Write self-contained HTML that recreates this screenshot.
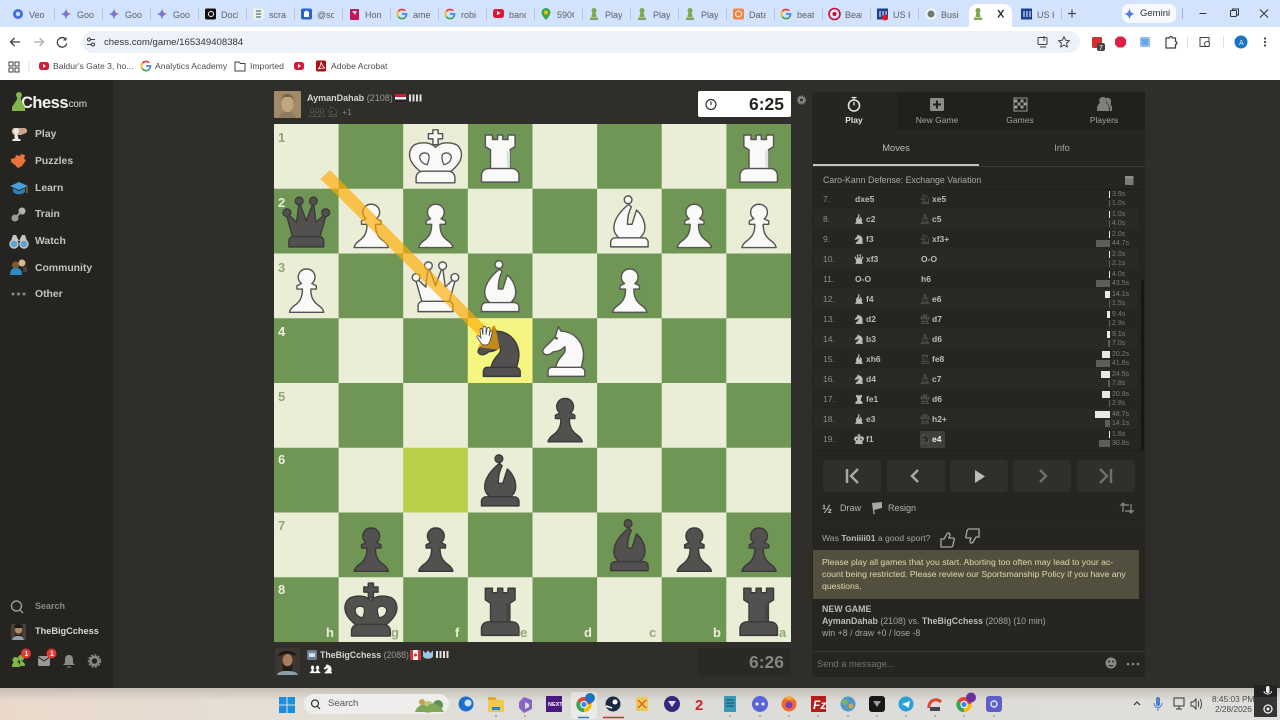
<!DOCTYPE html>
<html><head><meta charset="utf-8"><title>Chess.com game</title>
<style>
*{box-sizing:border-box}
html,body{margin:0;padding:0;width:1280px;height:720px;overflow:hidden;background:#302e2b}
body{font-family:"Liberation Sans",sans-serif;position:relative}
#w{position:absolute;left:0;top:0;width:1280px;height:720px;filter:blur(.35px);overflow:hidden}
.a{position:absolute}
.t{position:absolute;white-space:nowrap;line-height:1}
.w{--f:#f9f9f8;--s:#565452;--h:#e2e2e0;--i:#f9f9f8}
.b{--f:#53514f;--s:#3c3a38;--h:#474543;--i:#ebeed6}
.mw{--f:#bdbcba;--s:#bdbcba;--h:#bdbcba;--i:#26251f}
.mb{--f:#2a2926;--s:#aaa9a7;--h:#2a2926;--i:#aaa9a7}
.tab{position:absolute;top:8.500px;font-size:9px;color:#5b6068;line-height:12px;width:17px;overflow:hidden;white-space:nowrap}
.sep{position:absolute;top:8px;width:1px;height:12px;background:#b5c3d8}
.menu{position:absolute;left:35px;font-size:10.400px;font-weight:bold;color:#c4c3c1;line-height:12px}
.r{position:absolute;left:813px;width:325px;height:20px}
.r.z{background:#2a2926}
.n{position:absolute;left:10px;top:5px;font-size:8.500px;color:#8e8d8b;line-height:10px}
.m1,.m2{position:absolute;top:5px;font-size:8.500px;font-weight:bold;color:#bcbbb9;line-height:10px;white-space:nowrap}
.m1{left:42px}.m2{left:108px}
.m1 svg,.m2 svg{width:12px;height:12px;vertical-align:-1px;margin:-2px 1px -2px -2px}
.bw,.bb{position:absolute;right:28px;height:7px}
.bw{top:2px;background:#e8e8e6}.bb{top:11px;background:#5e5d5a}
.s1,.s2{position:absolute;left:299px;font-size:7px;color:#7d7c7a;line-height:8px}
.s1{top:1.500px}.s2{top:10.500px}
.nav{position:absolute;top:460px;height:32px;width:58px;background:#302f2c;border-radius:4px}
.tabb{position:absolute;top:92px;height:38px;background:#21201d}
.lab{position:absolute;font-size:8.500px;color:#a5a4a2;line-height:10px;text-align:center}
</style></head><body>
<div id="w">
<svg width="0" height="0" style="position:absolute">
<defs>
<g id="P"><path d="M50 24c-7 0-12.500 5.500-12.500 12.500 0 4 2 7.500 5 10l-7 3.500v5h8.500c0 10-2 17-9 23-5 4-10 7-11 13h53c-1-6-6-9-11-13-7-6-9-13-9-23h8.500v-5l-7-3.500c3-2.500 5-6 5-10 0-7-5.500-12.500-12.500-12.500z" style="fill:var(--f);stroke:var(--s)" stroke-width="2.200" stroke-linejoin="round"/></g>
<g id="R"><path d="M27 17h11v7h8v-7h8v7h8v-7h11v18l-8 5v29H35V40l-8-5z" style="fill:var(--f);stroke:var(--s)" stroke-width="2.200" stroke-linejoin="round"/><path d="M59 41h6v28h-5c0-9 0-19-1-28z" style="fill:var(--h)"/><path d="M32 69h36c7 0 11 5 11 11v10H21V80c0-6 4-11 11-11z" style="fill:var(--f);stroke:var(--s)" stroke-width="2.200" stroke-linejoin="round"/></g>
<g id="K"><path d="M46 9h8v6h7v8h-7v9h-8v-9h-7v-8h7z" style="fill:var(--f);stroke:var(--s)" stroke-width="2.200" stroke-linejoin="round"/><path d="M50 36C42 28 30 28 20 31 12 34 9 43 10 50c1 10 10 18 17 24h46c7-6 16-14 17-24 1-7-2-16-10-19-10-3-22-3-30 5z" style="fill:var(--f);stroke:var(--s)" stroke-width="2.200" stroke-linejoin="round"/><path d="M35 45c-6-1-11 3-9 9 1 4 5 8 11 9 3-6 4-13 2-16-1-1-2-2-4-2zM65 45c6-1 11 3 9 9-1 4-5 8-11 9-3-6-4-13-2-16 1-1 2-2 4-2z" style="fill:var(--i);stroke:var(--s)" stroke-width="2"/><path d="M31 73h38c7 0 11 5 11 10v8H20v-8c0-5 4-10 11-10z" style="fill:var(--f);stroke:var(--s)" stroke-width="2.200" stroke-linejoin="round"/></g>
<g id="Q"><path d="M29 75 18 36l17 16 4-32 11 30 11-30 4 32 17-16-11 39z" style="fill:var(--f);stroke:var(--s)" stroke-width="2.200" stroke-linejoin="round"/><g style="fill:var(--f);stroke:var(--s)" stroke-width="2.200"><circle cx="20" cy="37" r="6"/><circle cx="39" cy="19" r="6"/><circle cx="61" cy="19" r="6"/><circle cx="80" cy="37" r="6"/></g><path d="M30 74h40c4 0 7 3 7 7v9H23v-9c0-4 3-7 7-7z" style="fill:var(--f);stroke:var(--s)" stroke-width="2.200" stroke-linejoin="round"/></g>
<g id="B"><path d="M49 24C36 34 26 48 26 60c0 9 5 14 10 18h28c5-4 10-9 10-18 0-11-6-21-13-27l-7 22h-7c0-10 2-20 6-27z" style="fill:var(--f);stroke:var(--s)" stroke-width="2.200" stroke-linejoin="round"/><circle cx="48" cy="17" r="6" style="fill:var(--f);stroke:var(--s)" stroke-width="2.200"/><path d="M28 76h44c4 0 7 3 7 7v7H21v-7c0-4 3-7 7-7z" style="fill:var(--f);stroke:var(--s)" stroke-width="2.200" stroke-linejoin="round"/></g>
<g id="N"><path d="M40 13l4 7c18 0 34 14 35 36 0 8-2 14-4 21H36c1-10 7-16 12-22 3-4 3-8 2-11-6 6-12 8-18 8-4 4-10 6-14 3-4-3-2-7 2-11 8-8 14-12 16-18z" style="fill:var(--f);stroke:var(--s)" stroke-width="2.200" stroke-linejoin="round"/><circle cx="37" cy="31" r="2.200" style="fill:var(--s)"/><path d="M30 76h44c4 0 7 3 7 7v7H24v-7c0-4 2-7 6-7z" style="fill:var(--f);stroke:var(--s)" stroke-width="2.200" stroke-linejoin="round"/></g>
</defs></svg>

<!-- Chrome tab strip -->
<div class="a" style="left:0;top:0;width:1280px;height:27px;background:#d3e3fd"></div>
<div class="a" style="left:0;top:27px;width:1280px;height:53px;background:#fff"></div>
<div class="a" style="left:82px;top:31px;width:998px;height:22px;border-radius:11px;background:#edf2fa"></div>
<div class="a" style="left:969px;top:4px;width:43px;height:24px;border-radius:8px 8px 0 0;background:#fff"></div>
<div class="a" style="left:1122px;top:4px;width:54px;height:19px;border-radius:7px;background:#f6f9fe"></div>

<span class="tab" style="left:29px">Veo</span><span class="tab" style="left:77px">Goo</span><span class="tab" style="left:125px">Goo</span><span class="tab" style="left:173px">Goo</span><span class="tab" style="left:221px">Docl</span><span class="tab" style="left:269px">scra</span><span class="tab" style="left:317px">@so</span><span class="tab" style="left:365px">Hon</span><span class="tab" style="left:413px">ame</span><span class="tab" style="left:461px">robi</span><span class="tab" style="left:509px">banc</span><span class="tab" style="left:557px">590C</span><span class="tab" style="left:605px">Play</span><span class="tab" style="left:653px">Play</span><span class="tab" style="left:701px">Play</span><span class="tab" style="left:749px">Data</span><span class="tab" style="left:797px">beat</span><span class="tab" style="left:845px">Beat</span><span class="tab" style="left:893px">US H</span><span class="tab" style="left:941px">Busi</span><span class="tab" style="left:1037px">US H</span>
<span class="sep" style="left:54px"></span><span class="sep" style="left:102px"></span><span class="sep" style="left:150px"></span><span class="sep" style="left:198px"></span><span class="sep" style="left:246px"></span><span class="sep" style="left:294px"></span><span class="sep" style="left:342px"></span><span class="sep" style="left:390px"></span><span class="sep" style="left:438px"></span><span class="sep" style="left:486px"></span><span class="sep" style="left:534px"></span><span class="sep" style="left:582px"></span><span class="sep" style="left:630px"></span><span class="sep" style="left:678px"></span><span class="sep" style="left:726px"></span><span class="sep" style="left:774px"></span><span class="sep" style="left:822px"></span><span class="sep" style="left:870px"></span><span class="sep" style="left:918px"></span><span class="sep" style="left:1061px"></span>
<span class="t" style="left:1140px;top:9px;font-size:9.500px;color:#333">Gemini</span>

<span class="t" style="left:104px;top:38px;font-size:9.600px;color:#30343a">chess.com/game/165349408384</span>
<span class="t" style="left:53px;top:62px;font-size:8.600px;color:#4a4d52">Baldur's Gate 3, ho...</span>
<span class="t" style="left:155px;top:62px;font-size:8.600px;color:#4a4d52">Analytics Academy</span>
<span class="t" style="left:250px;top:62px;font-size:8.600px;color:#4a4d52">Imported</span>
<span class="t" style="left:331px;top:62px;font-size:8.600px;color:#4a4d52">Adobe Acrobat</span>

<!-- Page -->
<div class="a" style="left:0;top:80px;width:1280px;height:608px;background:#302e2b"></div>
<div class="a" style="left:0;top:80px;width:113px;height:608px;background:#262421"></div>

<!-- Sidebar text -->
<span class="t" style="left:21px;top:95px;font-size:16.500px;font-weight:bold;color:#f4f4f3;letter-spacing:-.5px">Chess</span>
<span class="t" style="left:66px;top:100px;font-size:10px;color:#dedddb;letter-spacing:-.2px">.com</span>
<span class="menu" style="top:129px">Play</span>
<span class="menu" style="top:156px">Puzzles</span>
<span class="menu" style="top:183px">Learn</span>
<span class="menu" style="top:209px">Train</span>
<span class="menu" style="top:236px">Watch</span>
<span class="menu" style="top:263px">Community</span>
<span class="menu" style="top:289px">Other</span>
<span class="t" style="left:35px;top:602px;font-size:9px;color:#8b8a88;font-weight:bold">Search</span>
<span class="t" style="left:35px;top:627px;font-size:9.200px;color:#d8d7d5;font-weight:bold">TheBigCchess</span>

<!-- Players -->
<span class="t" style="left:307px;top:94px;font-size:9px;font-weight:bold;color:#d6d5d3">AymanDahab <span style="font-weight:normal;color:#9a9997">(2108)</span></span>
<span class="t" style="left:342px;top:108px;font-size:8.500px;color:#83827f">+1</span>
<span class="t" style="left:320px;top:651px;font-size:8.800px;font-weight:bold;color:#d6d5d3">TheBigCchess <span style="font-weight:normal;color:#9a9997">(2088)</span></span>

<div class="a" style="left:698px;top:91px;width:93px;height:26px;background:#fff;border-radius:2px"></div>
<span class="t" style="right:496px;top:96px;font-size:17.500px;font-weight:bold;color:#27251f">6:25</span>
<div class="a" style="left:698px;top:648px;width:93px;height:28px;background:#2b2926;border-radius:2px"></div>
<span class="t" style="right:496px;top:654px;font-size:17.500px;font-weight:bold;color:#85847f">6:26</span>

<!-- Board -->
<svg class="a" style="left:274px;top:124px" width="517" height="518" viewBox="0 0 517 518">
<rect width="517" height="518" fill="#ebeed6"/>
<g fill="#6f9655">
<rect x="64.600" y="0" width="64.600" height="64.750"/><rect x="193.900" y="0" width="64.600" height="64.750"/><rect x="323.100" y="0" width="64.600" height="64.750"/><rect x="452.400" y="0" width="64.600" height="64.750"/>
<rect x="0" y="64.750" width="64.600" height="64.750"/><rect x="129.200" y="64.750" width="64.600" height="64.750"/><rect x="258.500" y="64.750" width="64.600" height="64.750"/><rect x="387.700" y="64.750" width="64.600" height="64.750"/>
<rect x="64.600" y="129.500" width="64.600" height="64.750"/><rect x="193.900" y="129.500" width="64.600" height="64.750"/><rect x="323.100" y="129.500" width="64.600" height="64.750"/><rect x="452.400" y="129.500" width="64.600" height="64.750"/>
<rect x="0" y="194.250" width="64.600" height="64.750"/><rect x="129.200" y="194.250" width="64.600" height="64.750"/><rect x="258.500" y="194.250" width="64.600" height="64.750"/><rect x="387.700" y="194.250" width="64.600" height="64.750"/>
<rect x="64.600" y="259" width="64.600" height="64.750"/><rect x="193.900" y="259" width="64.600" height="64.750"/><rect x="323.100" y="259" width="64.600" height="64.750"/><rect x="452.400" y="259" width="64.600" height="64.750"/>
<rect x="0" y="323.750" width="64.600" height="64.750"/><rect x="258.500" y="323.750" width="64.600" height="64.750"/><rect x="387.700" y="323.750" width="64.600" height="64.750"/>
<rect x="64.600" y="388.500" width="64.600" height="64.750"/><rect x="193.900" y="388.500" width="64.600" height="64.750"/><rect x="323.100" y="388.500" width="64.600" height="64.750"/><rect x="452.400" y="388.500" width="64.600" height="64.750"/>
<rect x="0" y="453.250" width="64.600" height="64.750"/><rect x="129.200" y="453.250" width="64.600" height="64.750"/><rect x="258.500" y="453.250" width="64.600" height="64.750"/><rect x="387.700" y="453.250" width="64.600" height="64.750"/>
</g>
<rect x="193.900" y="194.250" width="64.600" height="64.750" fill="#f5f682"/>
<rect x="129.200" y="323.750" width="64.600" height="64.750" fill="#bace48"/>
<g font-family="Liberation Sans,sans-serif" font-size="13" font-weight="bold">
<text x="4" y="18" fill="#8fa976">1</text><text x="4" y="83" fill="#ebeed6">2</text><text x="4" y="148" fill="#8fa976">3</text><text x="4" y="212" fill="#ebeed6">4</text><text x="4" y="277" fill="#8fa976">5</text><text x="4" y="340" fill="#ebeed6">6</text><text x="4" y="406" fill="#8fa976">7</text><text x="4" y="470" fill="#ebeed6">8</text>
<text x="52" y="513" fill="#ebeed6">h</text><text x="117" y="513" fill="#8fa976">g</text><text x="181" y="513" fill="#ebeed6">f</text><text x="246" y="513" fill="#8fa976">e</text><text x="310" y="513" fill="#ebeed6">d</text><text x="375" y="513" fill="#8fa976">c</text><text x="439" y="513" fill="#ebeed6">b</text><text x="505" y="513" fill="#8fa976">a</text>
</g>
<g class="w">
<use href="#K" transform="translate(129.200 0) scale(.646)"/><use href="#R" transform="translate(193.900 0) scale(.646)"/><use href="#R" transform="translate(452.400 0) scale(.646)"/>
<use href="#P" transform="translate(64.600 64.750) scale(.646)"/><use href="#P" transform="translate(129.200 64.750) scale(.646)"/><use href="#B" transform="translate(323.100 64.750) scale(.646)"/><use href="#P" transform="translate(387.700 64.750) scale(.646)"/><use href="#P" transform="translate(452.400 64.750) scale(.646)"/>
<use href="#P" transform="translate(0 129.500) scale(.646)"/><use href="#Q" transform="translate(129.200 129.500) scale(.646)"/><use href="#B" transform="translate(193.900 129.500) scale(.646)"/><use href="#P" transform="translate(323.100 129.500) scale(.646)"/>
<use href="#N" transform="translate(258.500 194.250) scale(.646)"/>
</g>
<g class="b">
<use href="#Q" transform="translate(0 64.750) scale(.646)"/>
<use href="#N" transform="translate(193.900 194.250) scale(.646)"/>
<use href="#P" transform="translate(258.500 259) scale(.646)"/>
<use href="#B" transform="translate(193.900 323.750) scale(.646)"/>
<use href="#P" transform="translate(64.600 388.500) scale(.646)"/><use href="#P" transform="translate(129.200 388.500) scale(.646)"/><use href="#B" transform="translate(323.100 388.500) scale(.646)"/><use href="#P" transform="translate(387.700 388.500) scale(.646)"/><use href="#P" transform="translate(452.400 388.500) scale(.646)"/>
<use href="#K" transform="translate(64.600 453.250) scale(.646)"/><use href="#R" transform="translate(193.900 453.250) scale(.646)"/><use href="#R" transform="translate(452.400 453.250) scale(.646)"/>
</g>
<!-- arrow -->
<path d="M46.500 55 L56 46 L214 205 L221 201 L226 226 L204 223 L208 215 Z" fill="#ffaa00" fill-opacity=".66"/>
<!-- hand cursor -->
<path d="M207 219c-2-3-5-6-4-7 2-1 3 1 4 2l-1-8c0-2 2-2 2 0l1 5 0-7c0-2 3-2 3 0v7l1-6c0-2 3-2 3 0l-1 7 1-4c1-2 3-1 2 1l-2 8c-1 3-2 4-5 4s-3-1-4-2z" fill="#fff" stroke="#333" stroke-width=".7"/>
</svg>

<!-- Right panel -->
<div class="a" style="left:812px;top:92px;width:333px;height:585px;background:#262522"></div>
<div class="tabb" style="left:897px;width:248px"></div>
<div class="lab" style="left:820px;top:115px;width:68px;color:#e3e2e0;font-weight:bold">Play</div>
<div class="lab" style="left:903px;top:115px;width:68px">New Game</div>
<div class="lab" style="left:986px;top:115px;width:68px">Games</div>
<div class="lab" style="left:1070px;top:115px;width:68px">Players</div>
<div class="lab" style="left:862px;top:143px;width:68px;font-size:9.400px;color:#bcbbb9">Moves</div>
<div class="lab" style="left:1028px;top:143px;width:68px;font-size:9.400px;color:#a5a4a2">Info</div>
<div class="a" style="left:813px;top:166px;width:332px;height:1px;background:#3a3936"></div>
<div class="a" style="left:813px;top:164px;width:166px;height:2px;background:#c4c3bf"></div>
<span class="t" style="left:823px;top:176px;font-size:8.800px;color:#a8a7a4">Caro-Kann Defense: Exchange Variation</span>
<div class="a" style="left:813px;top:189px;width:332px;height:1px;background:#1f1e1b"></div>

<div class="r" style="top:189px"><span class="n">7.</span><span class="m1">dxe5</span><span class="m2 mb"><svg viewBox="0 0 100 100"><use href="#N"/></svg>xe5</span><i class="bw" style="width:1.500px"></i><i class="bb" style="width:1px"></i><span class="s1">3.9s</span><span class="s2">1.0s</span></div>
<div class="r z" style="top:209px"><span class="n">8.</span><span class="m1 mw"><svg viewBox="0 0 100 100"><use href="#B"/></svg>c2</span><span class="m2 mb"><svg viewBox="0 0 100 100"><use href="#B"/></svg>c5</span><i class="bw" style="width:1.500px"></i><i class="bb" style="width:1px"></i><span class="s1">1.0s</span><span class="s2">4.0s</span></div>
<div class="r" style="top:229px"><span class="n">9.</span><span class="m1 mw"><svg viewBox="0 0 100 100"><use href="#N"/></svg>f3</span><span class="m2 mb"><svg viewBox="0 0 100 100"><use href="#N"/></svg>xf3+</span><i class="bw" style="width:1.500px"></i><i class="bb" style="width:14px"></i><span class="s1">2.0s</span><span class="s2">44.7s</span></div>
<div class="r z" style="top:249px"><span class="n">10.</span><span class="m1 mw"><svg viewBox="0 0 100 100"><use href="#Q"/></svg>xf3</span><span class="m2">O-O</span><i class="bw" style="width:1.500px"></i><i class="bb" style="width:1px"></i><span class="s1">2.0s</span><span class="s2">2.1s</span></div>
<div class="r" style="top:269px"><span class="n">11.</span><span class="m1">O-O</span><span class="m2">h6</span><i class="bw" style="width:1.500px"></i><i class="bb" style="width:14px"></i><span class="s1">4.0s</span><span class="s2">43.5s</span></div>
<div class="r z" style="top:289px"><span class="n">12.</span><span class="m1 mw"><svg viewBox="0 0 100 100"><use href="#B"/></svg>f4</span><span class="m2 mb"><svg viewBox="0 0 100 100"><use href="#B"/></svg>e6</span><i class="bw" style="width:5px"></i><i class="bb" style="width:1px"></i><span class="s1">14.1s</span><span class="s2">1.5s</span></div>
<div class="r" style="top:309px"><span class="n">13.</span><span class="m1 mw"><svg viewBox="0 0 100 100"><use href="#N"/></svg>d2</span><span class="m2 mb"><svg viewBox="0 0 100 100"><use href="#Q"/></svg>d7</span><i class="bw" style="width:3px"></i><i class="bb" style="width:1px"></i><span class="s1">9.4s</span><span class="s2">2.9s</span></div>
<div class="r z" style="top:329px"><span class="n">14.</span><span class="m1 mw"><svg viewBox="0 0 100 100"><use href="#N"/></svg>b3</span><span class="m2 mb"><svg viewBox="0 0 100 100"><use href="#B"/></svg>d6</span><i class="bw" style="width:3px"></i><i class="bb" style="width:2px"></i><span class="s1">9.1s</span><span class="s2">7.0s</span></div>
<div class="r" style="top:349px"><span class="n">15.</span><span class="m1 mw"><svg viewBox="0 0 100 100"><use href="#B"/></svg>xh6</span><span class="m2 mb"><svg viewBox="0 0 100 100"><use href="#R"/></svg>fe8</span><i class="bw" style="width:8px"></i><i class="bb" style="width:14px"></i><span class="s1">20.2s</span><span class="s2">41.6s</span></div>
<div class="r z" style="top:369px"><span class="n">16.</span><span class="m1 mw"><svg viewBox="0 0 100 100"><use href="#N"/></svg>d4</span><span class="m2 mb"><svg viewBox="0 0 100 100"><use href="#B"/></svg>c7</span><i class="bw" style="width:9.500px"></i><i class="bb" style="width:2px"></i><span class="s1">24.5s</span><span class="s2">7.8s</span></div>
<div class="r" style="top:389px"><span class="n">17.</span><span class="m1 mw"><svg viewBox="0 0 100 100"><use href="#R"/></svg>fe1</span><span class="m2 mb"><svg viewBox="0 0 100 100"><use href="#Q"/></svg>d6</span><i class="bw" style="width:8px"></i><i class="bb" style="width:1px"></i><span class="s1">20.8s</span><span class="s2">2.8s</span></div>
<div class="r z" style="top:409px"><span class="n">18.</span><span class="m1 mw"><svg viewBox="0 0 100 100"><use href="#B"/></svg>e3</span><span class="m2 mb"><svg viewBox="0 0 100 100"><use href="#Q"/></svg>h2+</span><i class="bw" style="width:15px"></i><i class="bb" style="width:5px"></i><span class="s1">48.7s</span><span class="s2">14.1s</span></div>
<div class="r" style="top:429px"><span class="n">19.</span><span class="m1 mw"><svg viewBox="0 0 100 100"><use href="#K"/></svg>f1</span><span class="a" style="left:107px;top:2px;width:25px;height:17px;background:#403f3c;border-radius:2px"></span><span class="m2 mb" style="color:#eee"><svg viewBox="0 0 100 100"><use href="#N"/></svg>e4</span><i class="bw" style="width:1.500px"></i><i class="bb" style="width:11px"></i><span class="s1">1.6s</span><span class="s2">30.8s</span></div>

<div class="a" style="left:1141px;top:280px;width:3px;height:170px;background:#171613"></div>
<div class="a" style="left:813px;top:450px;width:332px;height:1px;background:#1f1e1b"></div>
<div class="nav" style="left:823px"></div><div class="nav" style="left:887px"></div><div class="nav" style="left:950px"></div><div class="nav" style="left:1013px"></div><div class="nav" style="left:1077px"></div>

<span class="t" style="left:840px;top:504px;font-size:9px;color:#b5b4b2">Draw</span>
<span class="t" style="left:888px;top:504px;font-size:9px;color:#b5b4b2">Resign</span>
<div class="a" style="left:813px;top:523px;width:332px;height:1px;background:#2b2a27"></div>
<span class="t" style="left:822px;top:534px;font-size:8.600px;color:#a5a4a2">Was <b style="color:#bdbcba">Toniiii01</b> a good sport?</span>
<div class="a" style="left:813px;top:550px;width:326px;height:49px;background:#524f3e"></div>
<span class="t" style="left:822px;top:558px;font-size:8.700px;color:#e0dbaa">Please play all games that you start. Aborting too often may lead to your ac-</span>
<span class="t" style="left:822px;top:570px;font-size:8.700px;color:#e0dbaa">count being restricted. Please review our Sportsmanship Policy if you have any</span>
<span class="t" style="left:822px;top:582px;font-size:8.700px;color:#e0dbaa">questions.</span>
<span class="t" style="left:822px;top:605px;font-size:8.800px;font-weight:bold;color:#bdbcba">NEW GAME</span>
<span class="t" style="left:822px;top:617px;font-size:8.800px;color:#a5a4a2"><b style="color:#bdbcba">AymanDahab</b> (2108) vs. <b style="color:#bdbcba">TheBigCchess</b> (2088) (10 min)</span>
<span class="t" style="left:822px;top:629px;font-size:8.800px;color:#a5a4a2">win +8 / draw +0 / lose -8</span>
<div class="a" style="left:813px;top:651px;width:332px;height:1px;background:#3a3936"></div>
<span class="t" style="left:817px;top:660px;font-size:9.300px;color:#75746f">Send a message...</span>

<!-- Taskbar -->
<div class="a" style="left:0;top:688px;width:1280px;height:32px;background:linear-gradient(180deg,rgba(190,184,174,.8),rgba(225,222,216,0) 40%),linear-gradient(90deg,#ead9cb,#e4dfd7 25%,#dcdcd8 50%,#dedcd8 75%,#e0dfdc)"></div>
<div class="a" style="left:304px;top:694px;width:145px;height:20px;border-radius:10px;background:#eeeeec"></div>
<span class="t" style="left:328px;top:699px;font-size:9.600px;color:#54565a">Search</span>
<span class="t" style="left:1212px;top:694.500px;font-size:8.300px;color:#4a4c50">8:45:03 PM</span>
<span class="t" style="left:1215px;top:704.500px;font-size:8.300px;color:#4a4c50">2/28/2026</span>

<!-- Icon layer -->
<svg class="a" style="left:0;top:0" width="1280" height="720" viewBox="0 0 1280 720">
<!-- tab favicons -->
<circle cx="18" cy="14" r="5" fill="#3f6fd8"/><circle cx="18" cy="14" r="2.200" fill="#cfe0fb"/>
<g id="gem"><path d="M66 8.500c.7 3.500 2 4.800 5.500 5.500-3.500.7-4.800 2-5.500 5.500-.7-3.500-2-4.800-5.500-5.500 3.500-.7 4.800-2 5.500-5.500z" fill="#5b84e0"/><path d="M66 8.500c.7 3.500 2 4.800 5.500 5.500H66z" fill="#d96570"/></g>
<use href="#gem" x="48"/><use href="#gem" x="96"/>
<rect x="205" y="8.500" width="11" height="11" rx="1.500" fill="#111"/><circle cx="211" cy="14" r="2.500" fill="none" stroke="#eee"/>
<rect x="253" y="8.500" width="11" height="11" fill="#e9f3df"/><path d="M256 11h5M256 14h5M256 17h5" stroke="#354a8a"/>
<rect x="301" y="8.500" width="11" height="11" rx="2" fill="#2b63c7"/><path d="M304 17v-4c0-3 5-3 5 0v4z" fill="#fff"/>
<rect x="350" y="9" width="9" height="11" rx="1" fill="#c2185b"/><path d="M352 11h5l-2 4z" fill="#f3cfe0"/>
<g id="gg" fill="none" stroke-width="1.700"><path d="M398.300 11.400A4.500 4.500 0 0 1 405.200 10.800" stroke="#ea4335"/><path d="M398.300 11.400A4.500 4.500 0 0 0 398.300 16.600" stroke="#fbbc04"/><path d="M398.300 16.600A4.500 4.500 0 0 0 405.600 17" stroke="#34a853"/><path d="M402 14h4.500A4.500 4.500 0 0 1 405.600 17" stroke="#4285f4"/></g>
<use href="#gg" x="48"/><use href="#gg" x="384"/><use href="#gg" x="-256" y="52"/>
<rect x="493" y="9" width="11" height="9" rx="2.500" fill="#d81b3a"/><path d="M497 11v4l3.500-2z" fill="#fff"/>
<path d="M546 8a4.500 4.500 0 0 1 4.500 4.500c0 3-4.500 7.500-4.500 7.500s-4.500-4.500-4.500-7.500A4.500 4.500 0 0 1 546 8z" fill="#34a853"/><circle cx="546" cy="12.500" r="2" fill="#fbbc04"/>
<g id="pwn" fill="#7fa650"><circle cx="594" cy="10.500" r="2.500"/><path d="M592.500 12h3l1 5h-5zM590 17.500h8v2.500h-8z"/></g>
<use href="#pwn" x="48"/><use href="#pwn" x="96"/><use href="#pwn" x="384"/>
<rect x="733" y="8.500" width="11" height="11" rx="2" fill="#e8894a"/><circle cx="738.500" cy="14" r="3" fill="none" stroke="#fde3cf"/>
<circle cx="834.500" cy="14" r="5.500" fill="none" stroke="#cc0a28" stroke-width="1.600"/><circle cx="834.500" cy="14" r="2" fill="#cc0a28"/>
<rect x="877" y="8.500" width="11" height="11" fill="#1c3f94"/><path d="M880 11v6M883 11v6M886 11v6" stroke="#fff"/><circle cx="885" cy="17.500" r="3" fill="#e0142b"/>
<circle cx="931" cy="14" r="5.500" fill="#f2f5f8"/><circle cx="931" cy="14" r="3.500" fill="#6d7c70"/>
<rect x="1021" y="8.500" width="11" height="11" fill="#1c3f94"/><path d="M1024 11v6M1027 11v6M1030 11v6" stroke="#fff"/>
<path d="M998 10l5.500 7.500M1003.500 10l-5.500 7.500" stroke="#222" stroke-width="1.300"/>
<path d="M1072 9.500v8M1068 13.500h8" stroke="#45494f" stroke-width="1.200"/>
<path d="M1129.500 8.500c.7 3.500 2 4.800 5.500 5.500-3.500.7-4.800 2-5.500 5.500-.7-3.500-2-4.800-5.500-5.500 3.500-.7 4.800-2 5.500-5.500z" fill="#4c7fe0"/>
<path d="M1182.500 8v11" stroke="#a9b7cc"/>
<path d="M1199.500 13.500h7" stroke="#333"/>
<rect x="1230.500" y="10.500" width="6" height="6" rx="1" fill="none" stroke="#333"/><path d="M1232.500 10.500v-1.500h6v6h-1.500" fill="none" stroke="#333"/>
<path d="M1260 9.500l8 8M1268 9.500l-8 8" stroke="#333"/>
<!-- toolbar -->
<path d="M20 42h-9M14.500 38l-4 4 4 4" fill="none" stroke="#3c4043" stroke-width="1.300"/>
<path d="M34 42h9M39.500 38l4 4-4 4" fill="none" stroke="#a8adb3" stroke-width="1.300"/>
<path d="M66 39.500a4.800 4.800 0 1 0 .8 4" fill="none" stroke="#3c4043" stroke-width="1.300"/><path d="M66.500 37v3.500h-3.500z" fill="#3c4043"/>
<path d="M87 39.500h8M87 44.500h8" stroke="#3c4043"/><circle cx="89" cy="39.500" r="1.500" fill="#edf2fa" stroke="#3c4043"/><circle cx="93" cy="44.500" r="1.500" fill="#edf2fa" stroke="#3c4043"/>
<rect x="1038" y="37.500" width="9" height="7" rx="1" fill="none" stroke="#3c4043"/><path d="M1040 47h6M1044 36v5" stroke="#3c4043"/>
<path d="M1064 36.800l1.600 3.400 3.700.5-2.700 2.500.7 3.700-3.300-1.800-3.300 1.800.7-3.700-2.700-2.500 3.700-.5z" fill="none" stroke="#3c4043"/>
<rect x="1092" y="37" width="10" height="11" rx="1.500" fill="#d32f2f"/><rect x="1097" y="43" width="8" height="8" rx="2" fill="#444"/><text x="1099" y="50" font-size="7" fill="#fff" font-family="Liberation Sans">7</text>
<path d="M1118 36.500h5l3 3v5l-3 3h-5l-3-3v-5z" fill="#de1f48"/>
<rect x="1140" y="37" width="10" height="10" rx="1.500" fill="#90bdf0"/><rect x="1142" y="39" width="6" height="6" fill="#6aa4e8"/>
<path d="M1166 38h3.500a1.500 1.500 0 0 1 3 0h3v3.500a1.500 1.500 0 0 1 0 3v3.500h-9.500z" fill="none" stroke="#3c4043" stroke-width="1.200"/>
<rect x="1200" y="37.500" width="9" height="9" fill="none" stroke="#3c4043"/><circle cx="1207" cy="44" r="2.500" fill="#fff" stroke="#3c4043"/>
<path d="M1187.500 36v12M1223.500 36v12" stroke="#dcdfe3"/>
<circle cx="1241" cy="42" r="6.500" fill="#1a73c4"/><text x="1239" y="45" font-size="7" fill="#e8f2fb" font-family="Liberation Sans">A</text>
<g fill="#3c4043"><circle cx="1265" cy="38.500" r="1.100"/><circle cx="1265" cy="42" r="1.100"/><circle cx="1265" cy="45.500" r="1.100"/></g>
<!-- bookmarks -->
<path d="M9 62h4v4H9zM15 62h4v4h-4zM9 68h4v4H9zM15 68h4v4h-4z" fill="none" stroke="#3c4043" stroke-width="1"/>
<path d="M29 60v12" stroke="#dcdfe3"/>
<rect x="39" y="62" width="10" height="8" rx="2.500" fill="#d81b3a"/><path d="M43 64v4l3-2z" fill="#fff"/>
<rect x="294" y="62" width="10" height="8" rx="2.500" fill="#d81b3a"/><path d="M298 64v4l3-2z" fill="#fff"/>
<rect x="316" y="60.500" width="10" height="11" rx="1.500" fill="#a81212"/><path d="M318 69c2-1 3-5 3-7 1 3 2 5 4 6-2 0-4 0-7 1z" fill="none" stroke="#fff" stroke-width=".8"/>
<path d="M235 62h4l1.500 1.500h4.500v7.500h-10z" fill="none" stroke="#3c4043"/>
<!-- sidebar icons -->
<g fill="#81b64c"><circle cx="19" cy="95" r="3"/><path d="M17 97h4c-.5 3 1 5 2 7l2 3v4H12v-4l2-3c1-2 3.500-4 3-7z"/></g>
<path d="M14 128h10c3 0 4 3 2 5l-5 2h-7c-3-2-3-6 0-7z" fill="#caa78b"/><circle cx="16" cy="131" r="3" fill="#e8e8e6"/><path d="M14.500 134h3l1 5h2v2h-8v-2h2z" fill="#e8e8e6"/>
<path d="M11 159l4-1 1-3 4 1 1-2 4 1-1 4 2 1-2 3-2 3-4 2-3-3-4-3z" fill="#e8743b"/>
<path d="M10 186l9-4 9 4-9 4z" fill="#4aa0d8"/><path d="M13 188v4c3 3 9 3 12 0v-4l-6 3z" fill="#2e7fb8"/><path d="M27 187v6" stroke="#b7892e"/>
<circle cx="15" cy="218" r="3.500" fill="#9a9997"/><circle cx="22" cy="211" r="3.500" fill="#b5b4b2"/><path d="M16 217l5-5" stroke="#9a9997" stroke-width="2"/>
<circle cx="14" cy="244" r="4" fill="#5ba3d4" stroke="#c4c3c1" stroke-width="1.500"/><circle cx="24" cy="244" r="4" fill="#5ba3d4" stroke="#c4c3c1" stroke-width="1.500"/><path d="M11 241l2-6h3l3 6 3-6h3l2 6z" fill="#c4c3c1"/>
<circle cx="15.500" cy="265" r="3.500" fill="#7a5b40"/><path d="M10 275c0-6 3-7 6-7s6 1 6 7z" fill="#2f8ac4"/><circle cx="22" cy="263" r="3.500" fill="#d9b88a"/><path d="M23 267h4v5h-4z" fill="#46443f"/>
<g fill="#8b8a88"><circle cx="13" cy="294" r="1.500"/><circle cx="18.500" cy="294" r="1.500"/><circle cx="24" cy="294" r="1.500"/></g>
<circle cx="16.500" cy="606" r="5" fill="none" stroke="#9a9997" stroke-width="1.400"/><path d="M20 610l3 3" stroke="#9a9997" stroke-width="1.400"/>
<rect x="11" y="624" width="15" height="16" rx="1" fill="#4b4038"/><circle cx="18.500" cy="630" r="3.500" fill="#b48a68"/><path d="M14 626c2-3 7-3 9 0l-1 2h-7z" fill="#1f1a16"/><path d="M15 633c2 3 5 3 7 0v3h-7z" fill="#1d1915"/><path d="M12 640c1-3 3-4 6-4s5 1 6 4z" fill="#8fa3ad"/>
<circle cx="15.500" cy="660" r="3" fill="#81b64c"/><circle cx="21" cy="658" r="3" fill="#81b64c"/><path d="M12 667c0-4 2-5 4-5s4 1 4 5zM20 661c2 0 5 1 5 5h-5z" fill="#81b64c"/>
<rect x="38" y="656" width="12" height="10" rx="1.500" fill="#9a9997"/><path d="M38 657l6 4 6-4" fill="none" stroke="#262421"/>
<path d="M69 655c3 0 4 2 4 5v3l2 2H63l2-2v-3c0-3 1-5 4-5zM67 666.500h4v1h-4z" fill="#8b8a88"/>
<circle cx="94.500" cy="661" r="4" fill="none" stroke="#8b8a88" stroke-width="2.500"/><circle cx="94.500" cy="661" r="6" fill="none" stroke="#8b8a88" stroke-width="1.500" stroke-dasharray="2 1.500"/>
<circle cx="26" cy="653.500" r="5" fill="#e53935"/><circle cx="51.500" cy="653.500" r="5" fill="#e53935"/>
<text x="24.500" y="656" font-size="7" fill="#fff" font-family="Liberation Sans" font-weight="bold">1</text><text x="50" y="656" font-size="7" fill="#fff" font-family="Liberation Sans" font-weight="bold">1</text>
<!-- top player -->
<rect x="274" y="91" width="27" height="27" rx="1" fill="#a08a68"/><ellipse cx="287.500" cy="104" rx="6" ry="8" fill="#c4a67e"/><path d="M279 118c1-5 4-6 8.500-6s7.500 1 8.500 6z" fill="#8d7a5a"/><path d="M281 100c1-5 4-6 6.500-6s5.500 1 6.500 6l-3-3h-7z" fill="#74664c"/>
<rect x="395" y="94" width="11" height="3" fill="#d01c2f"/><rect x="395" y="97" width="11" height="2.500" fill="#fff"/><rect x="395" y="99.500" width="11" height="2.500" fill="#222"/>
<path d="M410 94.500v7M413.500 94.500v7M417 94.500v7M420.500 94.500v7" stroke="#e0dfdd" stroke-width="2"/>
<g class="mb" fill="none"><svg x="306" y="105" width="12" height="13" viewBox="0 0 100 100"><use href="#P"/></svg><svg x="311" y="105" width="12" height="13" viewBox="0 0 100 100"><use href="#P"/></svg><svg x="316" y="105" width="12" height="13" viewBox="0 0 100 100"><use href="#P"/></svg><svg x="326" y="105" width="13" height="13" viewBox="0 0 100 100"><use href="#N"/></svg></g>
<!-- clock and gear -->
<circle cx="711" cy="104.500" r="5" fill="none" stroke="#333" stroke-width="1.200"/><path d="M711 101.500v3.500" stroke="#333" stroke-width="1.200"/>
<circle cx="801.500" cy="100" r="2.500" fill="none" stroke="#8b8a88" stroke-width="2"/><circle cx="801.500" cy="100" r="4" fill="none" stroke="#8b8a88" stroke-width="1.200" stroke-dasharray="1.500 1.200"/>
<!-- bottom player -->
<rect x="275" y="648" width="25" height="27" rx="1" fill="#3c3733"/><ellipse cx="287.500" cy="660" rx="5" ry="6" fill="#a97c5c"/><path d="M278 656c2-7 16-7 19 0l-3-1-6-2-6 2z" fill="#1d1815"/><path d="M282 663c2 5 9 5 11 0l-1 8h-9z" fill="#211c18"/><path d="M277 675c1-3 4-4 10-4s10 1 11 4z" fill="#8d9fa6"/>
<rect x="307" y="650" width="10" height="10" rx="1" fill="#6b7d8c"/><path d="M309 652l1.500 2 1.500-2 1.500 2 1.500-2v5h-6z" fill="#d3e3f1"/>
<rect x="410" y="650" width="11" height="10" fill="#d8323c"/><rect x="413" y="650" width="5" height="10" fill="#f5f5f5"/><circle cx="415.500" cy="655" r="1.500" fill="#d8323c"/>
<path d="M423 650l2.500 2.500L428 650l2.500 2.500L433 650v6c-2 3-8 3-10 0z" fill="#9cc6e6" transform="translate(0 .5)"/>
<path d="M437 651v7M440.500 651v7M444 651v7M447.500 651v7" stroke="#e0dfdd" stroke-width="2"/>
<g class="w" style="--s:#f2f2f0"><svg x="307" y="662" width="11" height="13" viewBox="0 0 100 100"><use href="#P"/></svg><svg x="312" y="662" width="11" height="13" viewBox="0 0 100 100"><use href="#P"/></svg><svg x="322" y="662" width="12" height="13" viewBox="0 0 100 100"><use href="#N"/></svg></g>
<!-- panel tab icons -->
<circle cx="854" cy="105.500" r="5.500" fill="none" stroke="#e3e2e0" stroke-width="1.600"/><path d="M851.500 97.500h5M854 97.500v3M854 102v3.500" stroke="#e3e2e0" stroke-width="1.300"/>
<rect x="930" y="98" width="14" height="13" rx="1.500" fill="#8e8d8a"/><path d="M937 100.500v8M933 104.500h8" stroke="#21201d" stroke-width="2"/>
<rect x="1014" y="98" width="13" height="13" fill="none" stroke="#9a9997"/><path d="M1014.500 101h3M1020.500 101h3M1017.500 104h3M1023.500 104h3M1014.500 107h3M1020.500 107h3" stroke="#9a9997" stroke-width="3"/>
<path d="M1097 111c0-5 1-7 3-8-2-3 0-6 3-6s5 3 3 6c2 1 3 3 3 8zM1106 98c3-1 5 1 5 3s0 3-1 3c2 1 2 3 2 7h-2c0-5-2-7-3-8 0-1 0-4-1-5z" fill="#807f7c"/>
<rect x="1125" y="176" width="8.500" height="9" rx="1" fill="#7d7c79"/><path d="M1125 176.500h8.500v1.500h-8.500z" fill="#9a9997"/>
<!-- nav icons -->
<path d="M847 469v14M858 469l-7 7 7 7" fill="none" stroke="#a8a7a5" stroke-width="2.500"/>
<path d="M918 470l-6 6 6 6" fill="none" stroke="#a8a7a5" stroke-width="2.500"/>
<path d="M975 470l10 6.500-10 6.500z" fill="#bdbcba"/>
<path d="M1040 470l6 6-6 6" fill="none" stroke="#6f6e6b" stroke-width="2.500"/>
<path d="M1111 469v14M1100 469l7 7-7 7" fill="none" stroke="#6f6e6b" stroke-width="2.500"/>
<!-- action icons -->
<text x="822" y="513" font-size="12" font-weight="bold" fill="#bdbcba" font-family="Liberation Sans">½</text>
<path d="M872 503l10-1v6l-8 2 1 4h-1.500z" fill="#a8a7a5"/>
<path d="M1123 512v-7h6M1123 503l-2 2h4zM1131 504v7h-6M1131 513l2-2h-4z" fill="none" stroke="#8b8a88" stroke-width="1.200"/>
<path d="M941 539h3l3-5c1-2 3-1 3 1l-1 3h4c1 0 2 1 1 2l-1 5c0 1-1 2-2 2h-10z" fill="none" stroke="#a8a7a5" stroke-width="1.300"/>
<path d="M979 537h-3l-3 5c-1 2-3 1-3-1l1-3h-4c-1 0-2-1-1-2l1-5c0-1 1-2 2-2h10z" fill="none" stroke="#a8a7a5" stroke-width="1.300"/>
<circle cx="1111" cy="663" r="5.500" fill="#8b8a88"/><circle cx="1109" cy="661.500" r="1" fill="#262522"/><circle cx="1113" cy="661.500" r="1" fill="#262522"/><path d="M1108 665c2 2 4 2 6 0z" fill="#262522"/>
<g fill="#8b8a88"><circle cx="1128" cy="664" r="1.300"/><circle cx="1133" cy="664" r="1.300"/><circle cx="1138" cy="664" r="1.300"/></g>
<!-- taskbar icons -->
<path d="M279 697h7.500v7.500H279zM287.500 697h7.500v7.500h-7.500zM279 705.500h7.500v7.500H279zM287.500 705.500h7.500v7.500h-7.500z" fill="#1b8fe0"/>
<circle cx="315" cy="703.500" r="3.500" fill="none" stroke="#333" stroke-width="1.200"/><path d="M317.500 706.500l2.500 2.500" stroke="#333" stroke-width="1.200"/>
<circle cx="428" cy="707" r="6" fill="#b9c57a"/><circle cx="438" cy="705" r="5" fill="#5f9157"/><path d="M415 712c2-6 8-10 12-5 4-6 12-4 17 5z" fill="#7ea75a"/><circle cx="422" cy="702" r="3" fill="#c9a34c"/>
<circle cx="466" cy="704" r="7.500" fill="#1b6fd0"/><circle cx="468" cy="703" r="3.500" fill="#cfe4f8"/>
<rect x="488" y="700" width="16" height="12" rx="1" fill="#f2c94c"/><path d="M488 700v-3h7l2 3z" fill="#e0a92e"/><rect x="492" y="707" width="8" height="3" fill="#1b87d6"/>
<path d="M519 702l5-5 8 3v9l-8 4-5-5z" fill="#8a63c9"/><path d="M525 702l4 2v3l-4 2z" fill="#dcdcd8"/>
<rect x="546" y="696" width="16" height="16" fill="#4a1a80"/><text x="548" y="706" font-size="5.500" font-weight="bold" fill="#fff" font-family="Liberation Sans">NEXT</text>
<rect x="571" y="692" width="26" height="27" rx="3" fill="#fff" fill-opacity=".4"/>
<circle cx="584" cy="704.500" r="7.500" fill="#e94235"/><path d="M584 704.500l-6.500-4a7.500 7.500 0 0 0 6.500 11.500z" fill="#34a853"/><path d="M584 704.500l7.500-.5a7.500 7.500 0 0 1-7.500 8z" fill="#fbbc04"/><circle cx="584" cy="704.500" r="3.200" fill="#4285f4" stroke="#fff"/>
<circle cx="590" cy="698" r="5" fill="#1a73c4"/><path d="M578 717.500h11" stroke="#2b7fc4" stroke-width="1.500"/>
<circle cx="613" cy="704" r="7.500" fill="#1b2a44"/><circle cx="615" cy="702" r="2.500" fill="#fff"/><path d="M606 706l6 2" stroke="#fff" stroke-width="1.500"/><path d="M603 717.500h21" stroke="#b23a3a" stroke-width="1.500"/>
<rect x="636" y="697" width="12" height="14" fill="#eec95b"/><path d="M638 708l8-8M638 700l8 8" stroke="#d9652b" stroke-width="1.500"/>
<circle cx="672" cy="704" r="8" fill="#37277a"/><path d="M668 701h8l-4 6z" fill="#e0d9f3"/>
<text x="695" y="710" font-size="15" font-weight="bold" fill="#c62828" font-family="Liberation Sans">2</text>
<rect x="724" y="696" width="12" height="16" fill="#3a9ab8"/><path d="M726 700h8M726 703h8M726 706h8" stroke="#1a4a5c"/>
<circle cx="760" cy="704" r="8" fill="#5865d8"/><circle cx="757" cy="704" r="1.500" fill="#fff"/><circle cx="763" cy="704" r="1.500" fill="#fff"/>
<circle cx="789" cy="704" r="7.500" fill="#ef6a2f"/><circle cx="789" cy="705" r="3.500" fill="#7a3fb8"/><path d="M784 698c3-2 8-2 11 2-3-1-5 0-7 0z" fill="#f9a825"/>
<rect x="811" y="696" width="15" height="16" fill="#b71c1c"/><text x="813" y="709" font-size="12" font-weight="bold" font-style="italic" fill="#fff" font-family="Liberation Sans">Fz</text>
<circle cx="848" cy="704" r="7.500" fill="#4f98c9"/><circle cx="845" cy="702" r="3" fill="#7fb069"/><circle cx="851" cy="706" r="2.500" fill="#e8a13c"/>
<rect x="869" y="696" width="16" height="16" rx="3" fill="#171717"/><path d="M873 701h8l-4 6z" fill="#9c9c9c"/>
<circle cx="906" cy="704" r="7.500" fill="#2a9fd8"/><path d="M902 704l8-3-1.500 7-2.500-2z" fill="#fff"/>
<path d="M929 708a7 7 0 0 1 12-6" fill="none" stroke="#d94a30" stroke-width="3"/><rect x="930" y="707" width="10" height="4" fill="#445"/>
<circle cx="964" cy="704.500" r="7.500" fill="#e94235"/><path d="M964 704.500l-6.500-4a7.500 7.500 0 0 0 6.500 11.500z" fill="#34a853"/><path d="M964 704.500l7.500-.5a7.500 7.500 0 0 1-7.500 8z" fill="#fbbc04"/><circle cx="964" cy="704.500" r="3.200" fill="#4285f4" stroke="#fff"/><circle cx="971" cy="697.500" r="5" fill="#6a2fa0"/>
<rect x="986" y="696" width="16" height="16" rx="3" fill="#5d5fc8"/><circle cx="994" cy="704" r="3" fill="none" stroke="#dfe0f7" stroke-width="1.500"/>
<path d="M1134 705l3-3 3 3" fill="none" stroke="#333" stroke-width="1.200"/>
<rect x="1156" y="697" width="4" height="9" rx="2" fill="#4a7fc8"/><path d="M1154 703c0 6 8 6 8 0M1158 708v3" fill="none" stroke="#4a7fc8"/>
<rect x="1174" y="698" width="10" height="8" fill="none" stroke="#333"/><path d="M1176 709h6M1179 706v3" stroke="#333"/>
<path d="M1191 702h2l3-3v10l-3-3h-2zM1198 701c1 2 1 4 0 6M1200 699c2 3 2 7 0 10" fill="none" stroke="#333" stroke-width=".9"/>
<rect x="1254" y="685" width="23" height="12" fill="#222"/><rect x="1254" y="697" width="23" height="20" fill="#222" fill-opacity=".9"/>
<rect x="1266" y="686" width="3.500" height="7" rx="1.700" fill="#eee"/><path d="M1264 691c0 4 7.500 4 7.500 0" fill="none" stroke="#eee"/>
<circle cx="1268" cy="709" r="4" fill="none" stroke="#eee" stroke-width="1.300"/><circle cx="1268" cy="709" r="1.500" fill="#eee"/>
<g fill="#8d8d8a"><circle cx="496" cy="716" r="0.900"/><circle cx="525" cy="716" r="0.900"/><circle cx="730" cy="716" r="0.900"/><circle cx="760" cy="716" r="0.900"/><circle cx="789" cy="716" r="0.900"/><circle cx="818" cy="716" r="0.900"/><circle cx="848" cy="716" r="0.900"/><circle cx="877" cy="716" r="0.900"/><circle cx="906" cy="716" r="0.900"/><circle cx="935" cy="716" r="0.900"/><circle cx="964" cy="716" r="0.900"/><circle cx="994" cy="716" r="0.900"/></g>
</svg>
</div>
</body></html>
